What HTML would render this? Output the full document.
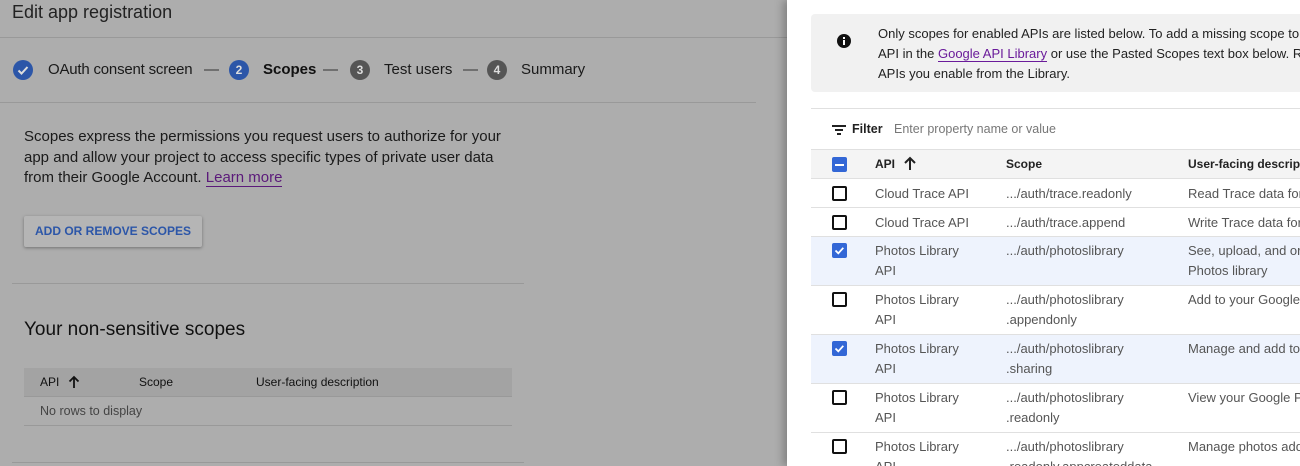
<!DOCTYPE html>
<html><head><style>
*{margin:0;padding:0;box-sizing:border-box}
body{width:1300px;height:466px;overflow:hidden;background:#adadad;font-family:"Liberation Sans",Arial,sans-serif;position:relative;color:#1a1a1a}
.a{position:absolute;white-space:nowrap}
.hl{position:absolute;height:1px;background:#999}
.circ{position:absolute;width:20px;height:20px;border-radius:50%;color:#ddd;font-size:12px;text-align:center;line-height:20px;font-weight:bold}
#panel{position:absolute;left:787px;top:0;width:513px;height:466px;background:#fff;box-shadow:-4px 0 8px rgba(0,0,0,.25);overflow:hidden}
.cb{position:absolute;left:45px;width:15px;height:15px;border:2px solid #111;border-radius:2px}
.cbc{position:absolute;left:45px;width:15px;height:15px;background:#3367d6;border-radius:2px}
.t{position:absolute;font-size:13px;color:#555;line-height:20px;white-space:nowrap}
.rl{position:absolute;left:24px;width:500px;height:1px;background:#e0e0e0}
.up{display:inline-block;vertical-align:middle}
</style></head><body>
<div class="a" style="left:12px;top:2px;font-size:18px;color:#222">Edit app registration</div>
<div class="hl" style="left:0;top:37px;width:787px"></div>
<div class="circ" style="left:13px;top:60px;background:#2c56a8"><svg width="20" height="20"><path d="M5.5 10.5l3 3 6-6.5" stroke="#ddd" stroke-width="2" fill="none"/></svg></div>
<div class="a" style="left:48px;top:61px;font-size:15px;letter-spacing:-0.2px">OAuth consent screen</div>
<div class="a" style="left:204px;top:61px;font-size:15px;color:#333">—</div>
<div class="circ" style="left:229px;top:60px;background:#2c56a8">2</div>
<div class="a" style="left:263px;top:61px;font-size:15px;font-weight:bold;color:#111">Scopes</div>
<div class="a" style="left:323px;top:61px;font-size:15px;color:#333">—</div>
<div class="circ" style="left:350px;top:60px;background:#555">3</div>
<div class="a" style="left:384px;top:61px;font-size:15px">Test users</div>
<div class="a" style="left:463px;top:61px;font-size:15px;color:#333">—</div>
<div class="circ" style="left:487px;top:60px;background:#555">4</div>
<div class="a" style="left:521px;top:61px;font-size:15px">Summary</div>
<div class="hl" style="left:0;top:102px;width:756px"></div>
<div class="a" style="left:24px;top:127px;font-size:15px;line-height:20.5px;white-space:normal;width:490px">Scopes express the permissions you request users to authorize for your app and allow your project to access specific types of private user data from their Google Account. <span style="color:#5b1a7a;border-bottom:1px solid #5b1a7a">Learn more</span></div>
<div class="a" style="left:24px;top:216px;width:178px;height:31px;background:#b5b5b5;box-shadow:0 1px 3px rgba(0,0,0,.35);border-radius:2px;color:#2c56a8;font-size:12px;font-weight:bold;line-height:31px;text-align:center">ADD OR REMOVE SCOPES</div>
<div class="hl" style="left:12px;top:283px;width:512px"></div>
<div class="a" style="left:24px;top:319px;font-size:19px;color:#111">Your non-sensitive scopes</div>
<div class="a" style="left:24px;top:368px;width:488px;height:29px;background:#a3a3a3;border-bottom:1px solid #999"></div>
<div class="a" style="left:40px;top:375px;font-size:12px;color:#111">API</div>
<svg class="a" style="left:68px;top:375px" width="12" height="14"><path d="M6 13V2M1.5 6.5L6 2l4.5 4.5" stroke="#111" stroke-width="1.8" fill="none"/></svg>
<div class="a" style="left:139px;top:375px;font-size:12px;color:#111">Scope</div>
<div class="a" style="left:256px;top:375px;font-size:12px;color:#111">User-facing description</div>
<div class="a" style="left:40px;top:404px;font-size:12.5px;color:#444">No rows to display</div>
<div class="hl" style="left:24px;top:425px;width:488px"></div>
<div class="hl" style="left:12px;top:462px;width:512px"></div>

<div id="panel">
<div class="a" style="left:24px;top:14px;width:500px;height:78px;background:#f1f1f1;border-radius:4px"></div>
<svg class="a" style="left:49px;top:33px" width="16" height="16"><circle cx="8" cy="8" r="7" fill="#111"/><rect x="7" y="7" width="2" height="5" fill="#fff"/><rect x="7" y="4" width="2" height="2" fill="#fff"/></svg>
<div class="a" style="left:91px;top:24px;font-size:13px;line-height:20px;color:#222">Only scopes for enabled APIs are listed below. To add a missing scope to<br>API in the <span style="color:#6a1b9a;border-bottom:1px solid #6a1b9a">Google API Library</span> or use the Pasted Scopes text box below. Re<br>APIs you enable from the Library.</div>
<div class="rl" style="top:108px"></div>
<svg class="a" style="left:45px;top:124px" width="14" height="12"><rect x="0" y="1" width="14" height="2" fill="#222"/><rect x="3" y="5" width="8" height="2" fill="#222"/><rect x="5" y="9" width="4" height="2" fill="#222"/></svg>
<div class="a" style="left:65px;top:122px;font-size:12.5px;font-weight:bold;color:#222">Filter</div>
<div class="a" style="left:107px;top:122px;font-size:12.5px;color:#777">Enter property name or value</div>
<div class="a" style="left:24px;top:149px;width:500px;height:30px;background:#f4f4f4;border-top:1px solid #e0e0e0;border-bottom:1px solid #e0e0e0"></div>
<div class="cbc" style="top:157px"><div style="position:absolute;left:3px;top:6.5px;width:9px;height:2px;background:#fff"></div></div>
<div class="a" style="left:88px;top:157px;font-size:12px;font-weight:bold;color:#222">API</div>
<svg class="a" style="left:116px;top:156px" width="14" height="15"><path d="M7 14V2M2 7l5-5 5 5" stroke="#222" stroke-width="2" fill="none"/></svg>
<div class="a" style="left:219px;top:157px;font-size:12px;font-weight:bold;color:#222">Scope</div>
<div class="a" style="left:401px;top:157px;font-size:12px;font-weight:bold;color:#222">User-facing descripti</div>

<div class="cb" style="top:186px"></div>
<div class="t" style="left:88px;top:184px">Cloud Trace API</div><div class="t" style="left:219px;top:184px">.../auth/trace.readonly</div><div class="t" style="left:401px;top:184px">Read Trace data for</div>
<div class="rl" style="top:207px"></div>
<div class="cb" style="top:215px"></div>
<div class="t" style="left:88px;top:213px">Cloud Trace API</div><div class="t" style="left:219px;top:213px">.../auth/trace.append</div><div class="t" style="left:401px;top:213px">Write Trace data for</div>
<div class="rl" style="top:236px"></div>

<div class="a" style="left:24px;top:237px;width:500px;height:48px;background:#eef3fd"></div>
<div class="cbc" style="top:243px"><svg width="15" height="15"><path d="M3.5 7.5l2.8 2.8 5-5.5" stroke="#fff" stroke-width="1.8" fill="none"/></svg></div>
<div class="t" style="left:88px;top:241px">Photos Library<br>API</div><div class="t" style="left:219px;top:241px">.../auth/photoslibrary</div><div class="t" style="left:401px;top:241px">See, upload, and org<br>Photos library</div>
<div class="rl" style="top:285px"></div>
<div class="cb" style="top:292px"></div>
<div class="t" style="left:88px;top:290px">Photos Library<br>API</div><div class="t" style="left:219px;top:290px">.../auth/photoslibrary<br>.appendonly</div><div class="t" style="left:401px;top:290px">Add to your Google</div>
<div class="rl" style="top:334px"></div>
<div class="a" style="left:24px;top:335px;width:500px;height:48px;background:#eef3fd"></div>
<div class="cbc" style="top:341px"><svg width="15" height="15"><path d="M3.5 7.5l2.8 2.8 5-5.5" stroke="#fff" stroke-width="1.8" fill="none"/></svg></div>
<div class="t" style="left:88px;top:339px">Photos Library<br>API</div><div class="t" style="left:219px;top:339px">.../auth/photoslibrary<br>.sharing</div><div class="t" style="left:401px;top:339px">Manage and add to</div>
<div class="rl" style="top:383px"></div>
<div class="cb" style="top:390px"></div>
<div class="t" style="left:88px;top:388px">Photos Library<br>API</div><div class="t" style="left:219px;top:388px">.../auth/photoslibrary<br>.readonly</div><div class="t" style="left:401px;top:388px">View your Google P</div>
<div class="rl" style="top:432px"></div>
<div class="cb" style="top:439px"></div>
<div class="t" style="left:88px;top:437px">Photos Library<br>API</div><div class="t" style="left:219px;top:437px">.../auth/photoslibrary<br>.readonly.appcreateddata</div><div class="t" style="left:401px;top:437px">Manage photos add</div>
</div>
</body></html>
